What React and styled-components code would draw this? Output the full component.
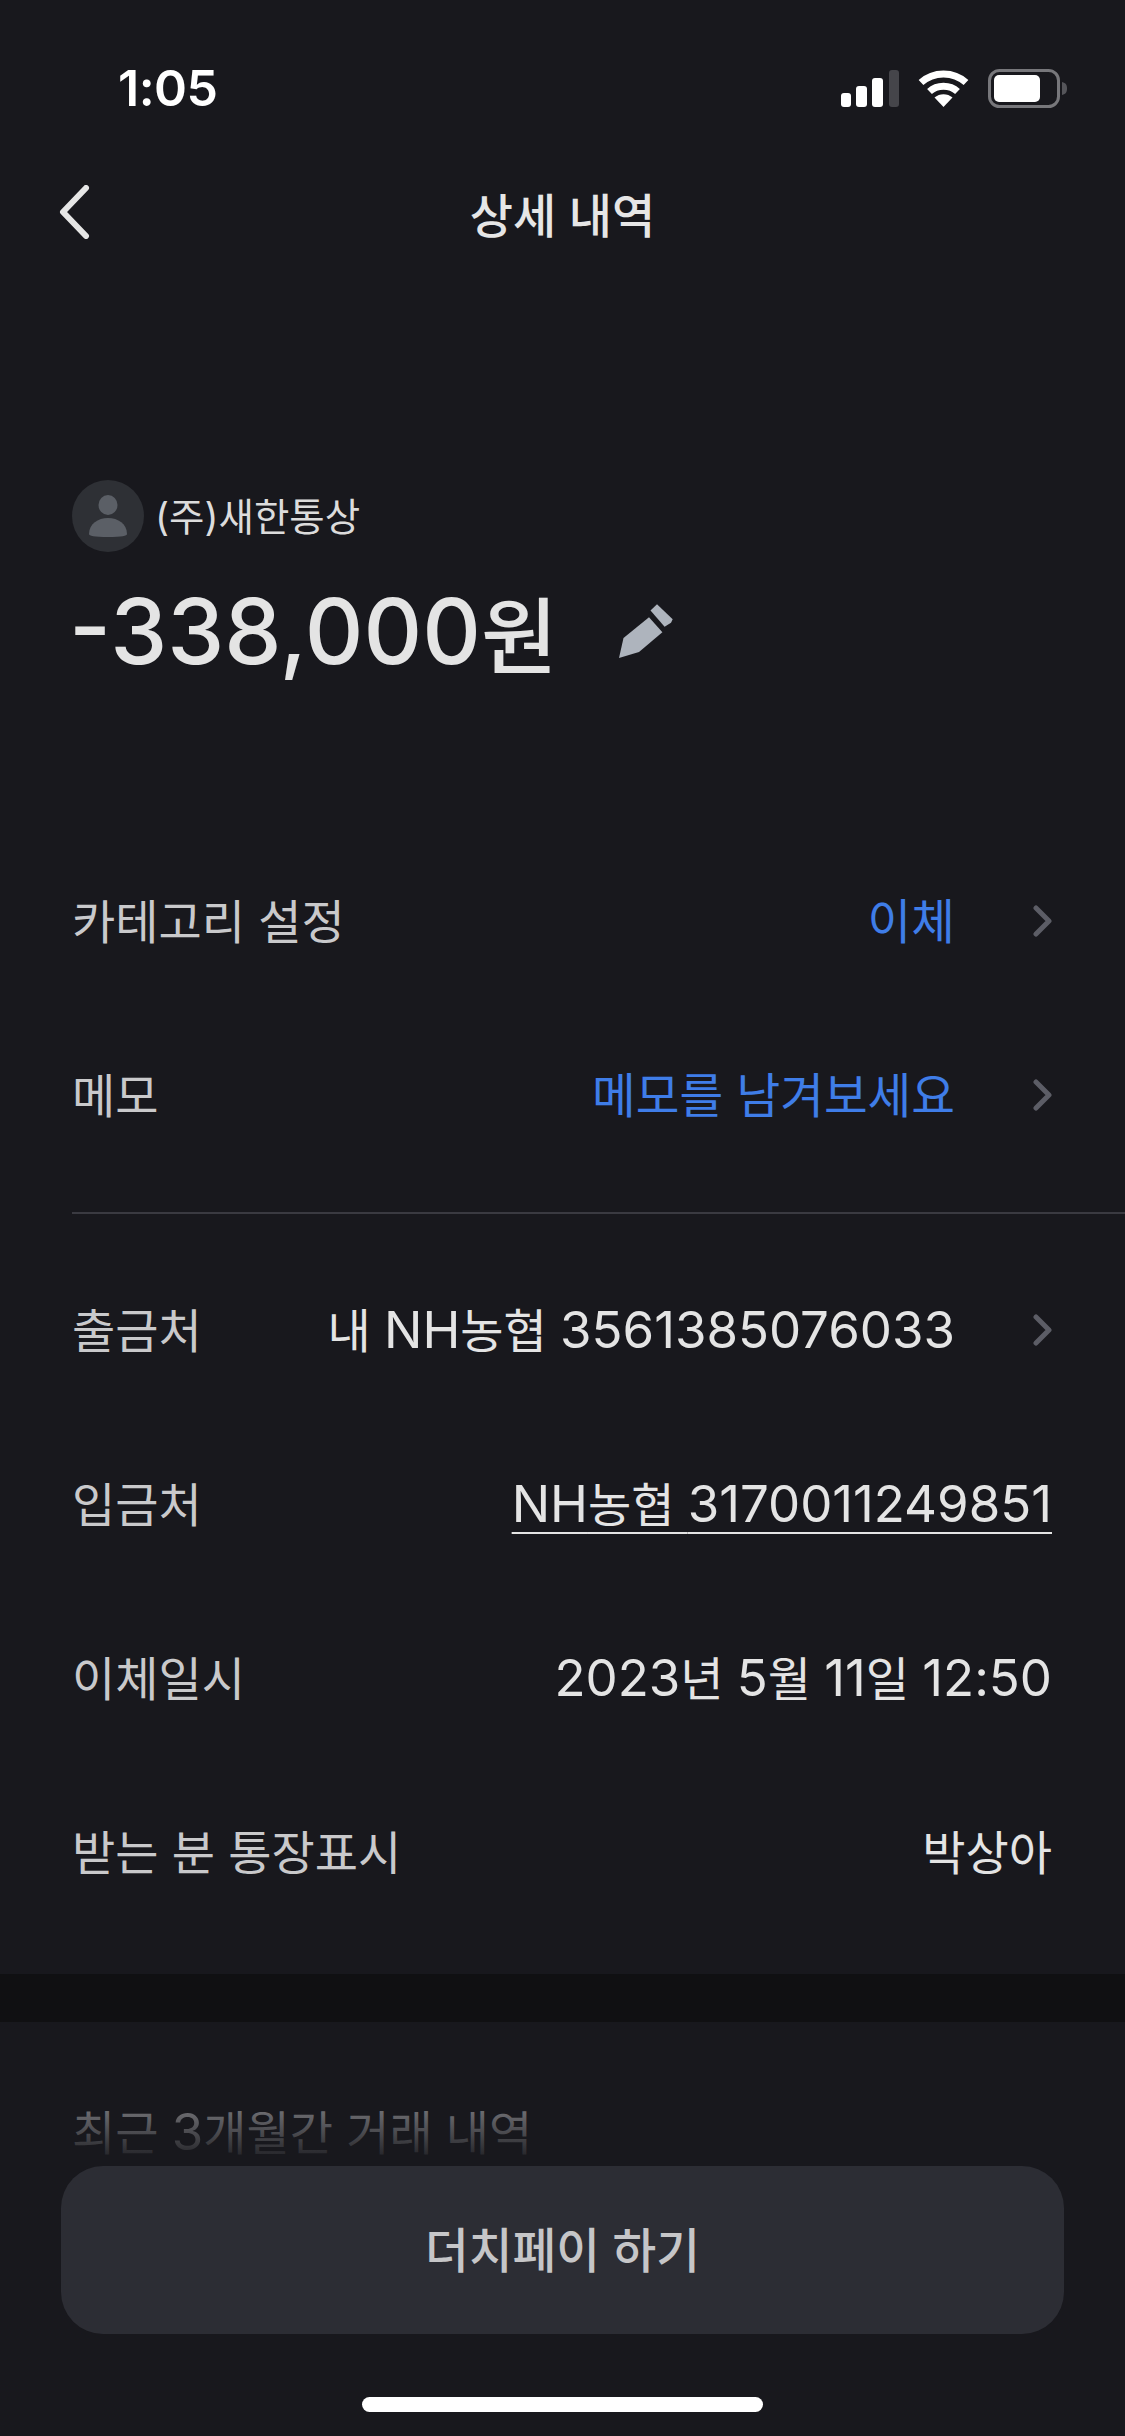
import styled, { createGlobalStyle } from "styled-components";

const GlobalStyle = createGlobalStyle`
  html, body {
    margin: 0;
    padding: 0;
    background: #18181d;
  }
  * {
    box-sizing: border-box;
  }
`;

const Screen = styled.div`
  position: relative;
  width: 1125px;
  height: 2436px;
  overflow: hidden;
  background: #18181d;
  color: #e4e4e4;
  font-family: Inter, "Noto Sans CJK KR", sans-serif;
`;

const StatusBar = styled.div`
  display: flex;
  justify-content: space-between;
  align-items: center;
  height: 130px;
  padding: 46px 57px 0 118px;
`;

const Clock = styled.span`
  font-size: 50px;
  font-weight: 600;
  letter-spacing: -0.5px;
  color: #fff;
`;

const StatusIcons = styled.div`
  display: flex;
  align-items: center;
  gap: 19px;
`;

const NavBar = styled.div`
  position: relative;
  display: flex;
  justify-content: center;
  align-items: center;
  height: 170px;
  padding-bottom: 6px;
`;

const BackButton = styled.svg`
  position: absolute;
  left: 58px;
  top: 55px;
`;

const NavTitle = styled.h1`
  margin: 0;
  font-size: 47px;
  font-weight: 500;
  color: #e6e6e6;
`;

const Hero = styled.div`
  padding: 180px 72px 148px;
`;

const Payee = styled.div`
  display: flex;
  align-items: center;
  gap: 11px;
  font-size: 38.5px;
  color: #dcdcdc;
`;

const PayeeName = styled.span`
  padding-bottom: 5px;
`;

const Amount = styled.div`
  display: flex;
  align-items: center;
  height: 110px;
  margin: 24px 0 0 -3px;
  color: #e4e4e4;
`;

const AmountFigure = styled.span`
  font-size: 91px;
  font-weight: 500;
`;

const AmountUnit = styled.span`
  margin-right: 62px;
  font-size: 83px;
  font-weight: 500;
`;

const Row = styled.div`
  display: flex;
  justify-content: space-between;
  align-items: center;
  height: 174px;
  padding: 0 73px 6px 72px;
  font-size: 47px;
`;

const Label = styled.span`
  color: #c9c9cb;
`;

const ValueGroup = styled.div`
  display: flex;
  align-items: center;
  gap: 78px;
`;

const Value = styled.span`
  color: ${(props) => (props.$accent ? "#3f7de8" : "#e4e4e4")};
  font-size: ${(props) => (props.$accent ? "47.5px" : "47px")};
  text-decoration: ${(props) => (props.$link ? "underline" : "none")};
  text-decoration-thickness: 2px;
  text-underline-offset: 10px;
`;

const Digits = styled.span`
  font-size: 51px;
`;

const RowChevron = styled.svg`
  margin-top: 6px;
`;

const Divider = styled.hr`
  height: 2px;
  margin: 30px 0 29px 72px;
  border: 0;
  background: #3a3a41;
`;

const Band = styled.div`
  height: 48px;
  margin-top: 35px;
  background: #101012;
`;

const SectionTitle = styled.h2`
  margin: 80px 0 0;
  padding-left: 72px;
  font-size: 47px;
  font-weight: 400;
  line-height: 60px;
  color: #8e8e92;
`;

const Dock = styled.div`
  position: absolute;
  left: 0;
  right: 0;
  bottom: 0;
  height: 336px;
  padding: 66px 61px 0;
  background: linear-gradient(
    to bottom,
    rgba(24, 24, 29, 0.15) 0,
    rgba(24, 24, 29, 0.8) 50px,
    #18181d 66px
  );
`;

const DutchPayButton = styled.button`
  display: block;
  width: 1003px;
  height: 168px;
  padding-bottom: 6px;
  border: 0;
  border-radius: 42px;
  background: #2c2d34;
  color: #c6c6c8;
  font-family: inherit;
  font-size: 47.5px;
  font-weight: 500;
`;

const HomeIndicator = styled.div`
  position: absolute;
  left: 362px;
  bottom: 24px;
  width: 401px;
  height: 15px;
  border-radius: 8px;
  background: #fff;
`;

const Signal = () => (
  <svg width="58" height="37" viewBox="0 0 58 37">
    <rect x="0" y="23" width="10" height="14" rx="3" fill="#fff" />
    <rect x="15" y="16" width="11" height="21" rx="3" fill="#fff" />
    <rect x="31" y="8" width="11" height="29" rx="3" fill="#fff" />
    <rect x="48" y="0" width="10" height="37" rx="3" fill="#45454a" />
  </svg>
);

const Wifi = () => (
  <svg width="51" height="37" viewBox="0 0 51 37" fill="none" stroke="#fff" strokeWidth="7">
    <path d="M3 12.500C15.500 1 35.500 1 48 12.500" />
    <path d="M11.500 21.500C19 14.500 32 14.500 39.500 21.500" />
    <path d="M25.500 37L16.500 27.500C21.500 23 29.500 23 34.500 27.500Z" fill="#fff" stroke="none" />
  </svg>
);

const Battery = () => (
  <svg width="80" height="39" viewBox="0 0 80 39">
    <rect x="1.500" y="1.500" width="69" height="36" rx="10" fill="none" stroke="#77777b" strokeWidth="3" />
    <rect x="6" y="6" width="46" height="27" rx="5" fill="#fff" />
    <path d="M74 13C78 14 79 16 79 19.500C79 23 78 25 74 26Z" fill="#55555a" />
  </svg>
);

const Chevron = () => (
  <RowChevron width="19" height="32" viewBox="0 0 19 32" fill="none" stroke="#5c5d66" strokeWidth="5" strokeLinecap="round" strokeLinejoin="round">
    <path d="M3 3L16 16L3 29" />
  </RowChevron>
);

const Avatar = () => (
  <svg width="72" height="72" viewBox="0 0 72 72">
    <circle cx="36" cy="36" r="36" fill="#2e3035" />
    <ellipse cx="36" cy="25" rx="9.500" ry="10" fill="#5b5f66" />
    <path d="M17 54C17 44 26 38 36 38C46 38 55 44 55 54C55 56 50 57 36 57C22 57 17 56 17 54Z" fill="#5b5f66" />
  </svg>
);

const Pencil = () => (
  <svg width="54" height="54" viewBox="0 0 54 54" fill="#aeb4bd">
    <path d="M0 54L4.500 34L30 13.300L43.400 28.300L20 48Z" />
    <path d="M31.500 6.500L38 0.300L53.700 15.300L52 18.700L45.600 22.700Z" />
  </svg>
);

const App = () => {
  return (
    <>
      <GlobalStyle />
      <Screen>
        <StatusBar>
          <Clock>1:05</Clock>
          <StatusIcons>
            <Signal />
            <Wifi />
            <Battery />
          </StatusIcons>
        </StatusBar>
        <NavBar>
          <BackButton width="32" height="54" viewBox="0 0 32 54" fill="none" stroke="#e6e6e6" strokeWidth="6" strokeLinecap="round" strokeLinejoin="round">
            <path d="M28 3L5 27L28 51" />
          </BackButton>
          <NavTitle>상세 내역</NavTitle>
        </NavBar>
        <Hero>
          <Payee>
            <Avatar />
            <PayeeName>(주)새한통상</PayeeName>
          </Payee>
          <Amount>
            <AmountFigure>-338,000</AmountFigure>
            <AmountUnit>원</AmountUnit>
            <Pencil />
          </Amount>
        </Hero>
        <Row>
          <Label>카테고리 설정</Label>
          <ValueGroup>
            <Value $accent>이체</Value>
            <Chevron />
          </ValueGroup>
        </Row>
        <Row>
          <Label>메모</Label>
          <ValueGroup>
            <Value $accent>메모를 남겨보세요</Value>
            <Chevron />
          </ValueGroup>
        </Row>
        <Divider />
        <Row>
          <Label>출금처</Label>
          <ValueGroup>
            <Value>내 <Digits>NH</Digits>농협 <Digits>3561385076033</Digits></Value>
            <Chevron />
          </ValueGroup>
        </Row>
        <Row>
          <Label>입금처</Label>
          <Value $link><Digits>NH</Digits>농협 <Digits>3170011249851</Digits></Value>
        </Row>
        <Row>
          <Label>이체일시</Label>
          <Value><Digits>2023</Digits>년 <Digits>5</Digits>월 <Digits>11</Digits>일 <Digits>12:50</Digits></Value>
        </Row>
        <Row>
          <Label>받는 분 통장표시</Label>
          <Value>박상아</Value>
        </Row>
        <Band />
        <SectionTitle>최근 <Digits>3</Digits>개월간 거래 내역</SectionTitle>
        <Dock>
          <DutchPayButton>더치페이 하기</DutchPayButton>
        </Dock>
        <HomeIndicator />
      </Screen>
    </>
  );
};

export default App;
